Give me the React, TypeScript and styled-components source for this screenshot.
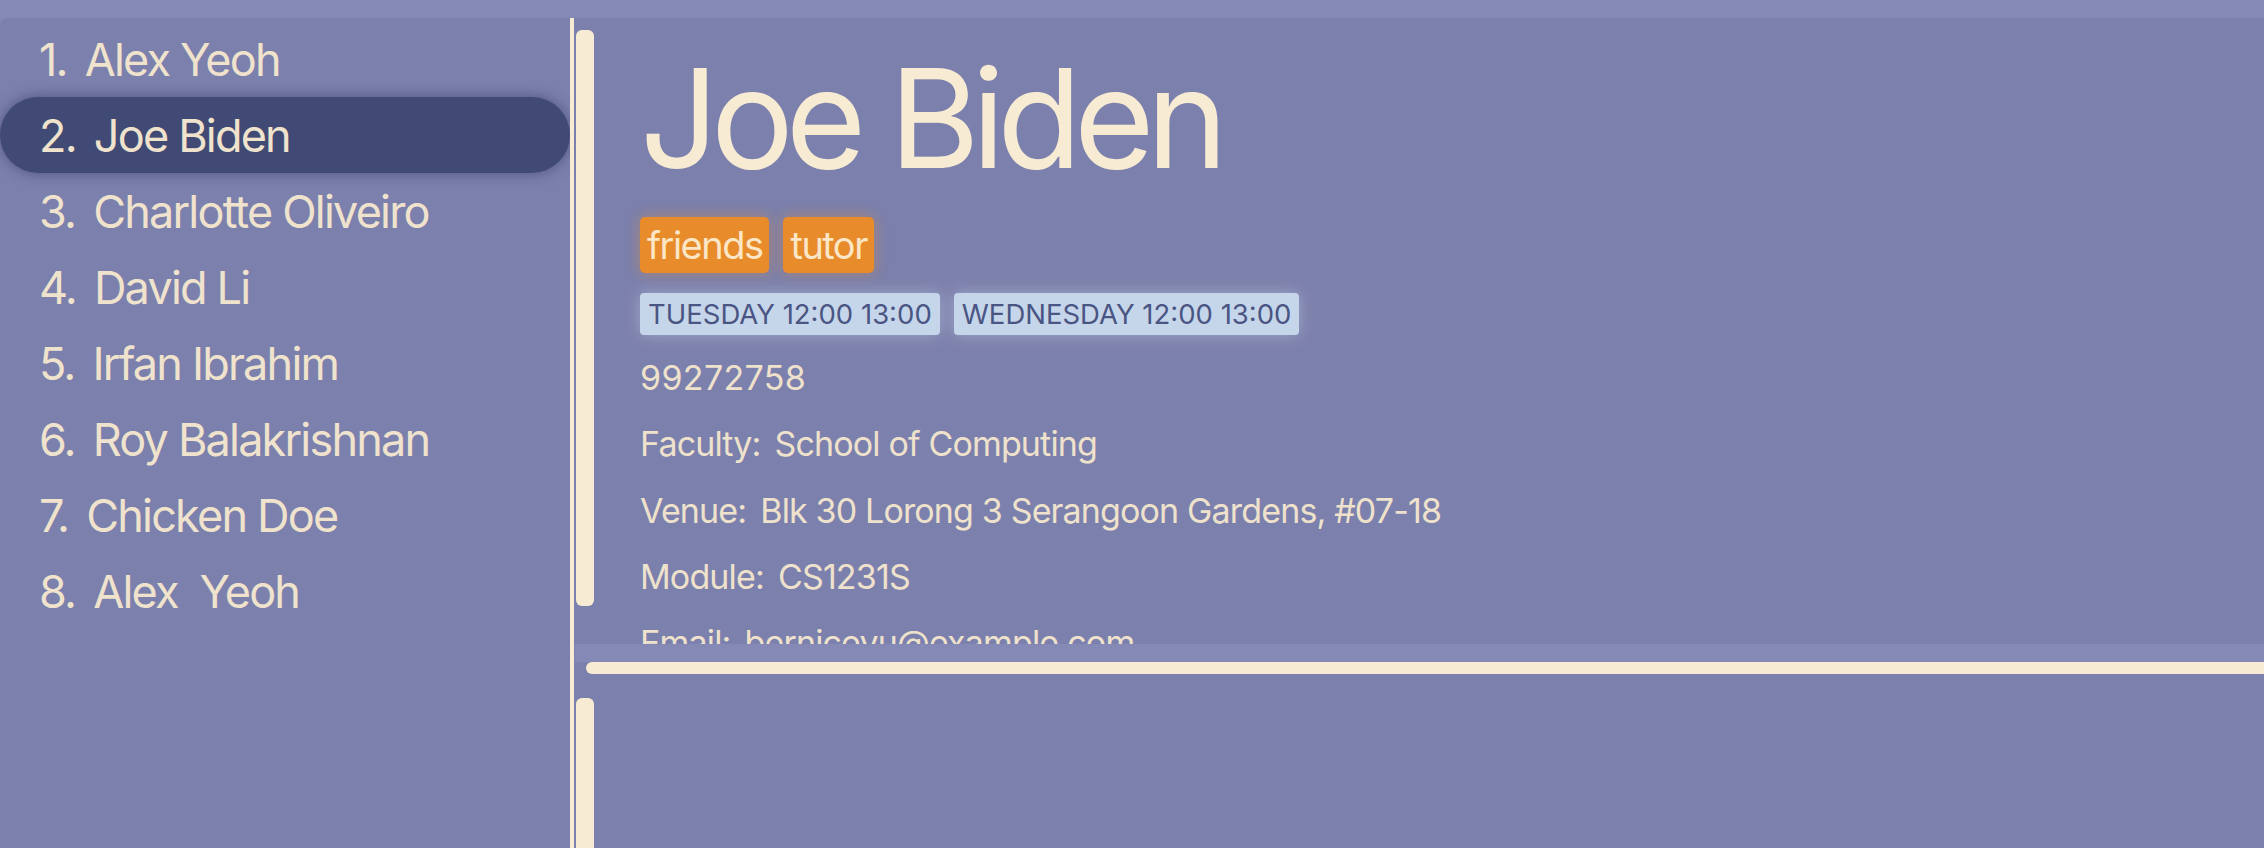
import React from 'react';
import styled, { createGlobalStyle, css } from 'styled-components';

const GlobalStyle = createGlobalStyle`
  html, body { margin: 0; padding: 0; }
  body {
    background: #8589b5;
    font-family: Inter, "Noto Sans", sans-serif;
    overflow: hidden;
  }
`;

const Window = styled.div`
  width: 2264px;
  height: 848px;
  padding-top: 18px;
  box-sizing: border-box;
  display: flex;
  background: #8589b5;
  overflow: hidden;
`;

const ListPanel = styled.ul`
  width: 570px;
  flex: none;
  margin: 0;
  padding: 3px 0 0;
  list-style: none;
  background: #7c80ac;
  border-top-left-radius: 8px;
`;

const Row = styled.li<{ $selected?: boolean }>`
  height: 76px;
  display: flex;
  align-items: center;
  gap: 18px;
  padding-left: 39px;
  font-size: 45px;
  letter-spacing: -0.04em;
  color: #f0e3cd;
  border-radius: 38px;
  white-space: pre;
  ${(p) =>
    p.$selected &&
    css`
      background: #414a74;
      box-shadow: 0 0 14px rgba(52, 58, 98, 0.65);
    `}
`;

const Divider = styled.div`
  width: 4px;
  flex: none;
  background: #f8ebd4;
`;

const RightColumn = styled.div`
  flex: 1;
  display: flex;
  flex-direction: column;
  background: #7c80ac;
  min-width: 0;
`;

const DetailPane = styled.div`
  height: 626px;
  flex: none;
  display: flex;
  overflow: hidden;
`;

const VGutter = styled.div<{ $top: number; $bottom: number }>`
  width: 21px;
  flex: none;
  box-sizing: border-box;
  padding: ${(p) => p.$top}px 1px ${(p) => p.$bottom}px 2px;
  display: flex;
  flex-direction: column;
`;

const VThumb = styled.div<{ $open?: boolean }>`
  flex: 1;
  background: #f8ebd4;
  border-radius: ${(p) => (p.$open ? '6px 6px 0 0' : '6px')};
`;

const Content = styled.div`
  flex: 1;
  padding-left: 45px;
  display: flex;
  flex-direction: column;
  overflow: hidden;
  min-width: 0;
`;

const Name = styled.h1`
  margin: 31px 0 0;
  font-size: 138px;
  line-height: 138px;
  font-weight: 400;
  letter-spacing: -0.057em;
  color: #f8ebd4;
  white-space: nowrap;
`;

const TagRow = styled.div`
  margin-top: 30px;
  display: flex;
  gap: 14px;
`;

const Tag = styled.span`
  height: 56px;
  padding: 0 7px;
  background: #e88b2a;
  border-radius: 5px;
  font-size: 38px;
  line-height: 56px;
  letter-spacing: -0.04em;
  color: #fbe6c6;
  box-shadow: 0 0 14px rgba(232, 139, 42, 0.45);
`;

const ChipRow = styled.div`
  margin-top: 20px;
  display: flex;
  gap: 14px;
`;

const Chip = styled.span`
  height: 42px;
  padding: 0 8px;
  background: #c6d6ea;
  border-radius: 4px;
  font-size: 27.5px;
  line-height: 42px;
  letter-spacing: 0;
  color: #4a5583;
  box-shadow: 0 0 16px rgba(214, 228, 246, 0.4);
  white-space: nowrap;
`;

const InfoList = styled.div`
  margin-top: 10px;
  display: flex;
  flex-direction: column;
`;

const InfoLine = styled.div`
  height: 66.3px;
  flex: none;
  display: flex;
  gap: 14px;
  font-size: 34px;
  line-height: 66px;
  letter-spacing: -0.025em;
  color: #efe2cc;
  white-space: nowrap;
`;

const Phone = styled(InfoLine)`
  letter-spacing: 0.01em;
`;

const HBand = styled.div`
  height: 18px;
  flex: none;
  margin-left: 1px;
  background: #8589b5;
`;

const HTrack = styled.div`
  height: 12px;
  flex: none;
  padding-left: 12px;
  display: flex;
`;

const HThumb = styled.div`
  flex: 1;
  background: #f8ebd4;
  border-radius: 6px 0 0 6px;
`;

const BottomPane = styled.div`
  flex: 1;
  display: flex;
  overflow: hidden;
`;

const people = [
  'Alex Yeoh',
  'Joe Biden',
  'Charlotte Oliveiro',
  'David Li',
  'Irfan Ibrahim',
  'Roy Balakrishnan',
  'Chicken Doe',
  'Alex  Yeoh',
];

const info: [string, string][] = [
  ['Faculty:', 'School of Computing'],
  ['Venue:', 'Blk 30 Lorong 3 Serangoon Gardens, #07-18'],
  ['Module:', 'CS1231S'],
  ['Email:', 'berniceyu@example.com'],
];

export default function App() {
  return (
    <>
      <GlobalStyle />
      <Window>
        <ListPanel>
          {people.map((n, i) => (
            <Row key={i} $selected={i === 1}>
              <span>{i + 1}.</span>
              <span>{n}</span>
            </Row>
          ))}
        </ListPanel>
        <Divider />
        <RightColumn>
          <DetailPane>
            <VGutter $top={12} $bottom={38}>
              <VThumb />
            </VGutter>
            <Content>
              <Name>Joe Biden</Name>
              <TagRow>
                <Tag>friends</Tag>
                <Tag>tutor</Tag>
              </TagRow>
              <ChipRow>
                <Chip>TUESDAY 12:00 13:00</Chip>
                <Chip>WEDNESDAY 12:00 13:00</Chip>
              </ChipRow>
              <InfoList>
                <Phone>99272758</Phone>
                {info.map(([k, v]) => (
                  <InfoLine key={k}>
                    <span>{k}</span>
                    <span>{v}</span>
                  </InfoLine>
                ))}
              </InfoList>
            </Content>
          </DetailPane>
          <HBand />
          <HTrack>
            <HThumb />
          </HTrack>
          <BottomPane>
            <VGutter $top={24} $bottom={0}>
              <VThumb $open />
            </VGutter>
          </BottomPane>
        </RightColumn>
      </Window>
    </>
  );
}
